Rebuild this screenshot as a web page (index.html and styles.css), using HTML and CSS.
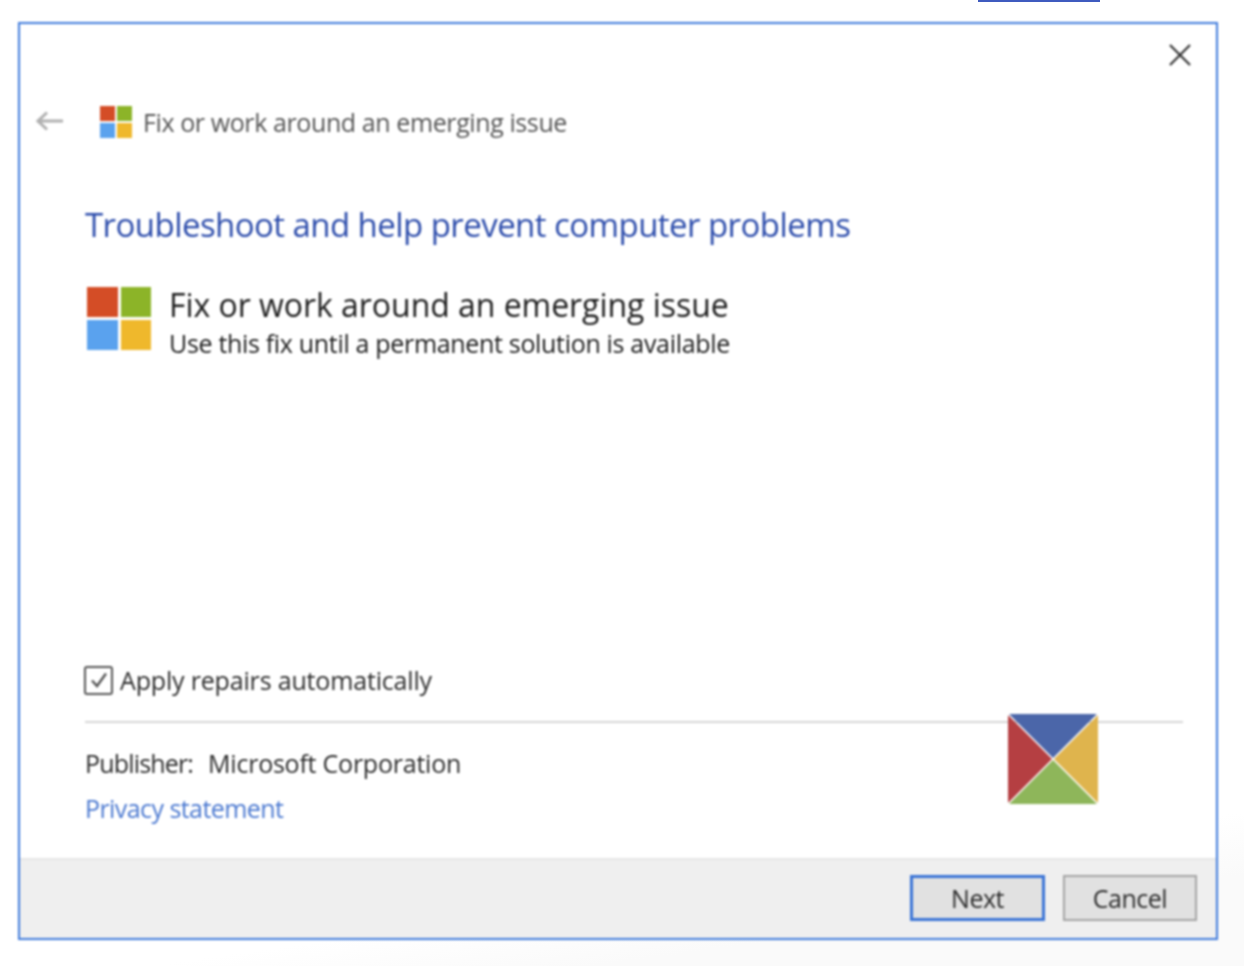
FILE: index.html
```html
<!DOCTYPE html>
<html lang="en">
<head>
    <meta charset="UTF-8">
    <meta name="viewport" content="width=device-width, initial-scale=1.0">
    <title>Fix or work around an emerging issue</title>
    <link rel="stylesheet" href="styles.css">
</head>
<body>
<div class="top-strip"></div>
<div class="window">
    <div class="close-row">
        <svg class="close-icon" width="24" height="24" viewBox="0 0 24 24">
            <path d="M2 2L22 22M22 2L2 22" stroke="#333" stroke-width="2.200" fill="none"/>
        </svg>
    </div>
    <div class="nav-row">
        <svg class="back-icon" width="28" height="20" viewBox="0 0 28 20">
            <path d="M27 10H2M11 1.500L2 10L11 18.500" stroke="#b0b0b0" stroke-width="3" fill="none"/>
        </svg>
        <div class="tiles tiles-small">
            <span class="tile tile-red"></span>
            <span class="tile tile-green"></span>
            <span class="tile tile-blue"></span>
            <span class="tile tile-yellow"></span>
        </div>
        <span class="nav-title">Fix or work around an emerging issue</span>
    </div>
    <div class="content">
        <h1>Troubleshoot and help prevent computer problems</h1>
        <div class="item">
            <div class="tiles tiles-large">
                <span class="tile tile-red"></span>
                <span class="tile tile-green"></span>
                <span class="tile tile-blue"></span>
                <span class="tile tile-yellow"></span>
            </div>
            <div class="item-text">
                <div class="item-title">Fix or work around an emerging issue</div>
                <div class="item-sub">Use this fix until a permanent solution is available</div>
            </div>
        </div>
        <div class="spacer"></div>
        <label class="repair-row">
            <span class="checkbox">
                <svg width="20" height="18" viewBox="0 0 20 18">
                    <path d="M3 9.500L8 15L17 2.500" stroke="#555" stroke-width="2.400" fill="none"/>
                </svg>
            </span>
            Apply repairs automatically
        </label>
        <div class="publisher-block">
            <!-- badge sits over the rule -->
            <svg class="badge" width="90" height="90" viewBox="0 0 90 90">
                <polygon points="1,0 89,0 45,44" fill="#4b66a9"/>
                <polygon points="90,1 90,89 46,45" fill="#dfb44d"/>
                <polygon points="1,90 89,90 45,46" fill="#8eb65a"/>
                <polygon points="0,1 0,89 44,45" fill="#b53f42"/>
            </svg>
            <div class="publisher"><span class="publisher-label">Publisher:</span>Microsoft Corporation</div>
            <a class="privacy" href="#">Privacy statement</a>
        </div>
    </div>
    <div class="footer">
        <button class="btn btn-default">Next</button>
        <button class="btn">Cancel</button>
    </div>
</div>
</body>
</html>
```

FILE: styles.css
```css
* {
    box-sizing: border-box;
}

body {
    font-family: "Open Sans", "Noto Sans", sans-serif;
    margin: 0;
    height: 966px;
    overflow: hidden;
    background: linear-gradient(172deg, #ffffff 86.500%, #fafafa 92%);
}

.top-strip {
    width: 122px;
    height: 2px;
    margin-left: 978px;
    background-color: #3f5bbf;
}

/* the reference is an upscaled capture, so everything in it is a bit soft */
.window {
    display: flex;
    flex-direction: column;
    width: 1200px;
    height: 918px;
    margin: 20px 0 0 18px;
    border: 2px solid #3f7bdc;
    background-color: #fff;
    filter: blur(0.8px);
}

.close-row {
    display: flex;
    justify-content: flex-end;
    padding: 19px 24px 0 0;
}

.close-icon {
    display: block;
}

.nav-row {
    display: flex;
    align-items: center;
    height: 32px;
    margin-top: 38px;
    padding-left: 16px;
}

.back-icon {
    margin-right: 36px;
}

.nav-title {
    margin-top: 2px;
    margin-left: 11px;
    font-size: 25px;
    color: #555;
    letter-spacing: -0.4px;
}

.tiles {
    display: grid;
    grid-template-columns: 1fr 1fr;
    flex: none;
}

.tiles-small {
    width: 32px;
    height: 32px;
    margin-top: 1px;
    gap: 2px;
}

.tiles-large {
    width: 64px;
    height: 63px;
    margin-top: 1px;
    gap: 3px;
}

.tile-red { background-color: #d44d26; }
.tile-green { background-color: #8cb428; }
.tile-blue { background-color: #5aa2ee; }
.tile-yellow { background-color: #efb82c; }

.content {
    display: flex;
    flex-direction: column;
    flex: 1;
    padding: 0 33px 0 65px;
}

h1 {
    margin: 65px 0 0;
    font-size: 33px;
    line-height: 46px;
    font-weight: 400;
    color: #2c4cab;
    letter-spacing: -0.56px;
    white-space: nowrap;
}

.item {
    display: flex;
    margin-top: 38px;
    margin-left: 2px;
}

.item-text {
    margin-left: 18px;
}

.item-title {
    font-size: 32px;
    line-height: 38px;
    color: #1c1c1c;
    letter-spacing: -0.04px;
}

.item-sub {
    font-size: 25px;
    line-height: 38px;
    color: #1c1c1c;
    letter-spacing: -0.32px;
}

.spacer {
    flex: 1;
}

.repair-row {
    display: flex;
    align-items: center;
    gap: 7px;
    height: 30px;
    font-size: 25px;
    color: #2c2c2c;
    letter-spacing: -0.17px;
}

.checkbox {
    display: flex;
    align-items: center;
    justify-content: center;
    width: 29px;
    height: 29px;
    margin-left: -1px;
    border: 2.500px solid #555;
    border-radius: 3px;
}

.publisher-block {
    position: relative;
    margin-top: 26px;
    padding-top: 21px;
    padding-bottom: 31px;
    border-top: 2px solid #d6d6d6;
    font-size: 25px;
}

.badge {
    position: absolute;
    top: -9px;
    left: 923px;
    border-radius: 3px;
}

.publisher {
    line-height: 38px;
    color: #2c2c2c;
    letter-spacing: -0.23px;
}

.publisher-label {
    margin-right: 15px;
    letter-spacing: -0.83px;
}

.privacy {
    display: block;
    margin-top: 7px;
    line-height: 38px;
    color: #4a78d0;
    letter-spacing: -0.57px;
    text-decoration: none;
}

.footer {
    display: flex;
    justify-content: flex-end;
    align-items: center;
    gap: 18px;
    height: 80px;
    padding-right: 19px;
    padding-bottom: 3px;
    background-color: #efefef;
    border-top: 2px solid #e6e6e6;
}

.btn {
    width: 134px;
    height: 46px;
    font-family: inherit;
    font-size: 25px;
    letter-spacing: -0.5px;
    color: #2c2c2c;
    background-color: #e1e1e1;
    border: 2px solid #a4a4a4;
}

.btn-default {
    width: 135px;
    border: 3px solid #3a74d6;
}
```
